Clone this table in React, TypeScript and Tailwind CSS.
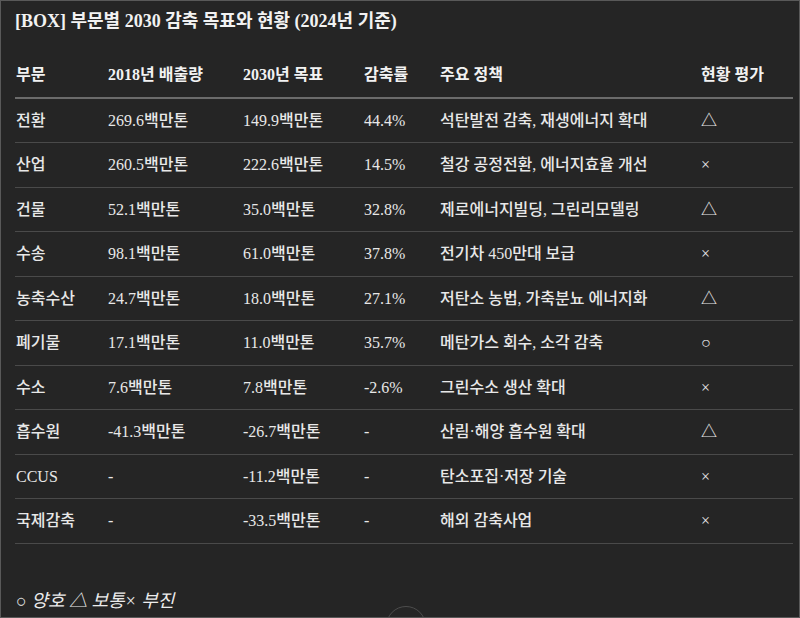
const rows = [
  ['전환', '269.6백만톤', '149.9백만톤', '44.4%', '석탄발전 감축, 재생에너지 확대', '△'],
  ['산업', '260.5백만톤', '222.6백만톤', '14.5%', '철강 공정전환, 에너지효율 개선', '×'],
  ['건물', '52.1백만톤', '35.0백만톤', '32.8%', '제로에너지빌딩, 그린리모델링', '△'],
  ['수송', '98.1백만톤', '61.0백만톤', '37.8%', '전기차 450만대 보급', '×'],
  ['농축수산', '24.7백만톤', '18.0백만톤', '27.1%', '저탄소 농법, 가축분뇨 에너지화', '△'],
  ['폐기물', '17.1백만톤', '11.0백만톤', '35.7%', '메탄가스 회수, 소각 감축', '○'],
  ['수소', '7.6백만톤', '7.8백만톤', '-2.6%', '그린수소 생산 확대', '×'],
  ['흡수원', '-41.3백만톤', '-26.7백만톤', '-', '산림·해양 흡수원 확대', '△'],
  ['CCUS', '-', '-11.2백만톤', '-', '탄소포집·저장 기술', '×'],
  ['국제감축', '-', '-33.5백만톤', '-', '해외 감축사업', '×'],
]

const headers = ['부문', '2018년 배출량', '2030년 목표', '감축률', '주요 정책', '현황 평가']
const widths = ['w-[92px]', 'w-[135px]', 'w-[121px]', 'w-[76px]', 'w-[261px]', '']

export default function App() {
  return (
    <div
      className="relative h-[618px] w-[800px] overflow-hidden border border-[#595959] bg-[#252525] text-[#ececec]"
      style={{ fontFamily: '"Liberation Serif", "Noto Sans CJK KR", serif' }}
    >
      <div className="pl-[14px] pr-[6px] pt-[8px]">
        <h2 className="text-[18px] font-bold leading-6 text-[#f2f2f2]">
          [BOX] 부문별 2030 감축 목표와 현황 (2024년 기준)
        </h2>

        <table className="mt-[20px] w-full border-collapse text-left text-[16px]">
          <thead>
            <tr className="border-b-2 border-[#6b6b6b]">
              {headers.map((h, i) => (
                <th
                  key={h}
                  className={`${widths[i]} py-[11px] pl-[1px] font-bold leading-[21.5px] text-[#f2f2f2]`}
                >
                  {h}
                </th>
              ))}
            </tr>
          </thead>
          <tbody>
            {rows.map((r) => (
              <tr key={r[0]} className="border-b border-[#4a4a4a]">
                {r.map((c, i) => (
                  <td key={i} className="py-[11px] pl-[1px] font-medium leading-[21.5px] text-[#e8e8e8]">
                    {c}
                  </td>
                ))}
              </tr>
            ))}
          </tbody>
        </table>

        <p className="mt-[45px] pl-[1px] text-[18px] italic leading-6 text-[#ececec]">
          ○ 양호 △ 보통× 부진
        </p>
      </div>

      <div className="absolute left-[385px] top-[605px] h-10 w-10 rounded-full border border-[#4d4d4d] bg-[#262626]" />
    </div>
  )
}
